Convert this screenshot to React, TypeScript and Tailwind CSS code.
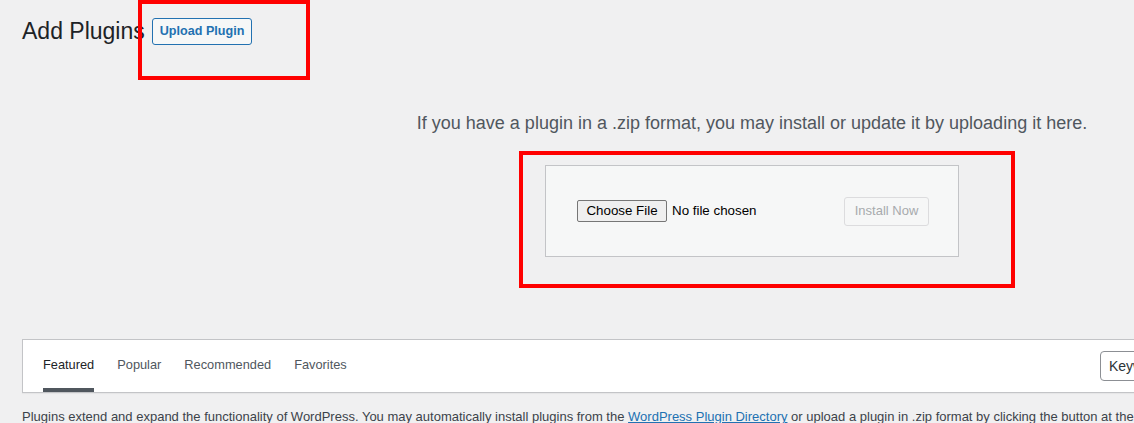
import React from 'react';

const tabs = ['Featured', 'Popular', 'Recommended', 'Favorites'];

function UploadForm() {
  return (
    <div className="mx-auto mt-[28px] flex h-[92px] w-[414px] items-center justify-between border border-[#c3c4c7] bg-[#f6f7f7] pl-[31px] pr-[29px]">
      <div className="flex items-center font-['Liberation_Sans',Arial,sans-serif] text-[13.33px] text-black">
        <span className="flex h-[22px] w-[90px] items-center justify-center rounded-[2px] border border-[#767676] bg-[#efefef]">
          Choose File
        </span>
        <span className="ml-[5px]">No file chosen</span>
      </div>
      <button
        disabled
        className="h-[29px] w-[85px] rounded-[3px] border border-[#dcdcde] bg-[#f6f7f7] text-[13px] text-[#a7aaad]"
      >
        Install Now
      </button>
    </div>
  );
}

function FilterBar() {
  return (
    <div className="mt-[82px] flex h-[54px] items-center border border-[#c3c4c7] bg-white px-[10px] shadow-[0_1px_1px_rgba(0,0,0,0.04)]">
      <ul className="flex h-full items-start gap-[3px]">
        {tabs.map((t, i) => (
          <li key={t} className="mx-[10px] h-full">
            <a
              className={
                'block h-full border-b-4 pt-[16px] text-[12.8px] leading-[18px] ' +
                (i === 0 ? 'border-[#50575e] text-[#1d2327]' : 'border-transparent text-[#50575e]')
              }
            >
              {t}
            </a>
          </li>
        ))}
      </ul>
      <div className="ml-auto flex items-center gap-[4px]">
        <div className="flex h-[30px] w-[90px] items-center rounded-[4px] border border-[#8c8f94] bg-white pl-[8px] text-[14px] text-[#2c3338]">
          Keyword
        </div>
        <div className="h-[30px] w-[277px] rounded-[4px] border border-[#8c8f94] bg-white" />
      </div>
    </div>
  );
}

export default function App() {
  return (
    <div className="relative h-[423px] w-[1134px] overflow-hidden bg-[#f0f0f1] font-['Liberation_Sans',Arial,sans-serif] text-[#3c434a]">
      <div className="ml-[22px] w-[1460px]">
        <div className="flex items-center gap-[7px] pt-[16px]">
          <h1 className="text-[23px] font-normal leading-[30px] text-[#1d2327]">Add Plugins</h1>
          <span className="flex h-[27px] items-center rounded-[3px] border border-[#2271b1] bg-[#f6f7f7] px-[7px] text-[12.6px] font-semibold text-[#2271b1]">
            Upload Plugin
          </span>
        </div>

        <p className="mt-[64px] text-center text-[18px] leading-[27px] text-[#50575e]">
          If you have a plugin in a .zip format, you may install or update it by uploading it here.
        </p>

        <UploadForm />

        <FilterBar />

        <p className="mt-[14px] whitespace-nowrap text-[13px] leading-[19.5px] text-[#3c434a]">
          Plugins extend and expand the functionality of WordPress. You may automatically install plugins from the{' '}
          <a className="text-[#2271b1] underline">WordPress Plugin Directory</a> or upload a plugin in .zip format by
          clicking the button at the top of this page.
        </p>
      </div>

      {/* annotation boxes drawn over the screenshot */}
      <div className="absolute left-[138px] top-0 h-[80px] w-[172px] border-4 border-[#ff0000]" />
      <div className="absolute left-[519px] top-[151px] h-[137px] w-[496px] border-4 border-[#ff0000]" />
    </div>
  );
}
